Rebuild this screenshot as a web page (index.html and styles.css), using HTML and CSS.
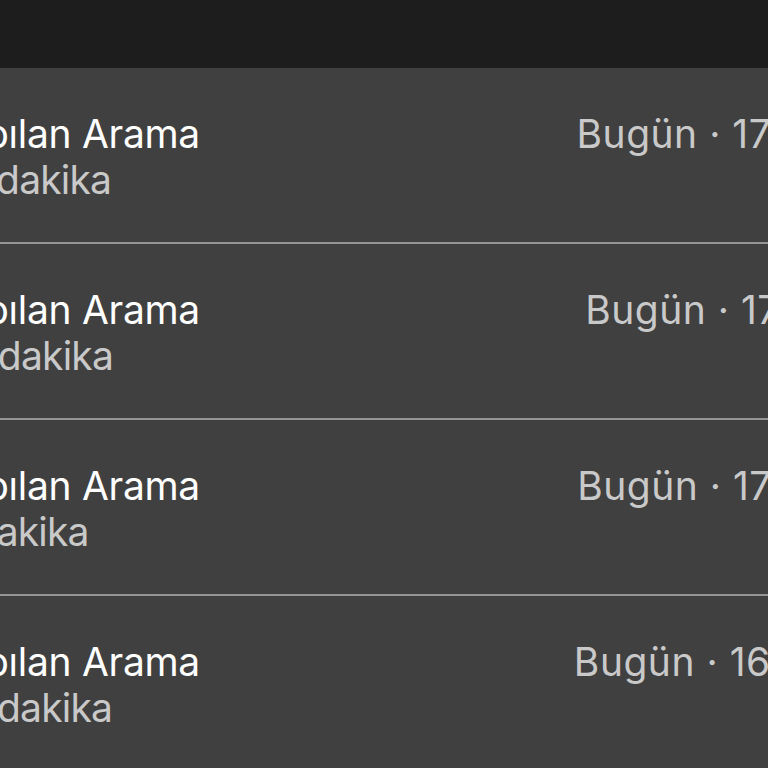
FILE: index.html
```html
<!DOCTYPE html>
<html lang="tr">
<head>
<meta charset="utf-8">
<title>Aramalar</title>
<link rel="stylesheet" href="styles.css">
</head>
<body>
<div class="topbar"></div>
<div class="list">
  <div class="row">
    <div class="info">
      <div class="title">Yapılan Arama</div>
      <div class="sub">25 dakika</div>
    </div>
    <div class="time">Bugün · 17:41</div>
  </div>
  <div class="row">
    <div class="info">
      <div class="title">Yapılan Arama</div>
      <div class="sub">34 dakika</div>
    </div>
    <div class="time">Bugün · 17:11</div>
  </div>
  <div class="row">
    <div class="info">
      <div class="title">Yapılan Arama</div>
      <div class="sub">9 dakika</div>
    </div>
    <div class="time">Bugün · 17:21</div>
  </div>
  <div class="row">
    <div class="info">
      <div class="title">Yapılan Arama</div>
      <div class="sub">20 dakika</div>
    </div>
    <div class="time">Bugün · 16:51</div>
  </div>
</div>
</body>
</html>
```
FILE: styles.css
```css
html, body {
  margin: 0;
  padding: 0;
  background: #404040;
  overflow: hidden;
  width: 768px;
  height: 768px;
}
body {
  font-family: Inter, "Noto Sans", "Liberation Sans", sans-serif;
}
.topbar {
  height: 68px;
  background: #1d1d1d;
}
.list {
  margin-left: -60px;
  width: 883px;
}
.row {
  display: flex;
  justify-content: space-between;
  align-items: flex-start;
  box-sizing: border-box;
  height: 176px;
  padding-top: 43px;
  border-bottom: 2px solid #969696;
}
.info {
  display: flex;
  flex-direction: column;
}
.title,
.sub,
.time {
  font-size: 39px;
  line-height: 46px;
  letter-spacing: -0.3px;
  white-space: nowrap;
}
.title {
  color: #ffffff;
}
.sub {
  color: #c9c9c9;
  letter-spacing: -0.8px;
}
.time {
  color: #c9c9c9;
  letter-spacing: 0.5px;
}
```
